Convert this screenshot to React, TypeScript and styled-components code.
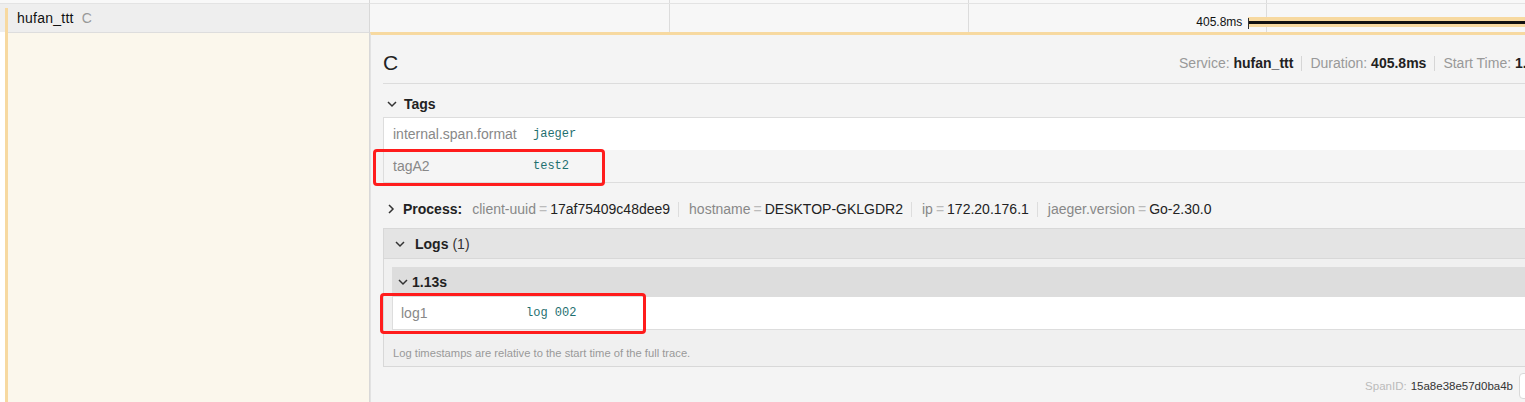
import React from "react";
import styled, { createGlobalStyle } from "styled-components";

const SERVICE = "#f7d9a0";
const LEFT = 370;

const GlobalStyle = createGlobalStyle`
  html, body { margin: 0; padding: 0; background: #fff; overflow: hidden; }
  body { font-family: "Liberation Sans", Arial, sans-serif; font-size: 14px; color: #333; }
  * { box-sizing: border-box; }
`;

const Page = styled.div`
  position: relative;
  width: 1565px;
  height: 402px;
  overflow: hidden;
`;

const Row = styled.div`
  display: grid;
  grid-template-columns: ${LEFT}px 1fr;
`;

const PrevName = styled.div`
  height: 4px;
  background: #f8f8f8;
  border-bottom: 1px solid #e3e3e3;
  border-right: 1px solid #d8d8d8;
`;

const Timeline = styled.div<{ $bg: string; $h: number; $border?: boolean }>`
  position: relative;
  height: ${(p) => p.$h}px;
  background: ${(p) => p.$bg};
  border-bottom: ${(p) => (p.$border ? "1px solid #e3e3e3" : "none")};
`;

const Tick = styled.div<{ $at: number }>`
  position: absolute;
  top: 0;
  bottom: 0;
  left: ${(p) => p.$at}%;
  width: 1px;
  background: #dcdcdc;
`;

const NameCell = styled.div`
  display: flex;
  height: 28px;
  background: #eeeeee;
  border-right: 1px solid #d8d8d8;
`;

const Indent = styled.div`
  width: 5px;
  flex: none;
`;

const AccentBar = styled.div<{ $top?: number }>`
  width: 3px;
  flex: none;
  margin-top: ${(p) => p.$top ?? 0}px;
  background: ${SERVICE};
`;

const SpanName = styled.div`
  padding-left: 9px;
  line-height: 28px;
  font-size: 14px;
  letter-spacing: 0.25px;
  color: #111;
  white-space: nowrap;
`;

const SpanOp = styled.span`
  margin-left: 8px;
  color: #999;
`;

const BarGroup = styled.div`
  position: absolute;
  left: 73.5%;
  top: 13px;
  right: 0;
  height: 10px;
`;

const BarLabel = styled.span`
  position: absolute;
  right: calc(100% + 6px);
  top: -2px;
  font-size: 12px;
  line-height: 14px;
  color: #111;
  white-space: nowrap;
`;

const BarBody = styled.div`
  position: absolute;
  inset: 0;
  background: ${SERVICE};
  display: flex;
  align-items: center;
`;

const BarLine = styled.div`
  height: 3px;
  width: 100%;
  background: #111;
`;

const BarStart = styled.div`
  position: absolute;
  left: 0;
  top: 1px;
  height: 11px;
  width: 1px;
  background: #333;
`;

const DetailLeft = styled.div`
  display: flex;
  height: 370px;
`;

const Cream = styled.div`
  flex: 1;
  background: #fbf7ec;
  border-top: 1px solid #dddddd;
  border-right: 1px solid #d8d8d8;
`;

const DetailPanel = styled.div`
  background: #f4f4f4;
  border-top: 3px solid ${SERVICE};
  border-left: 1px solid #e2e2e2;
  padding: 12px;
  height: 370px;
`;

const Header = styled.div`
  display: flex;
  align-items: center;
  justify-content: space-between;
  height: 37px;
  padding-bottom: 4px;
  border-bottom: 1px solid #dcdcdc;
`;

const Title = styled.h2`
  margin: 0;
  font-size: 21px;
  font-weight: normal;
  color: #222;
`;

const Overview = styled.div`
  display: flex;
  align-items: center;
  padding-right: 3px;
  font-size: 14px;
  white-space: nowrap;
`;

const OvItem = styled.div<{ $first?: boolean }>`
  padding: 0 8px;
  border-left: ${(p) => (p.$first ? "none" : "1px solid #d6d6d6")};
  line-height: 15px;
  &:last-child { padding-right: 0; }
`;

const OvLabel = styled.span`
  color: #999;
`;

const OvValue = styled.strong`
  color: #222;
  font-weight: bold;
`;

const Section = styled.div<{ $mt: number }>`
  margin-top: ${(p) => p.$mt}px;
`;

const AccHeader = styled.div<{ $h: number; $mb?: number }>`
  display: flex;
  align-items: center;
  height: ${(p) => p.$h}px;
  margin-bottom: ${(p) => p.$mb ?? 0}px;
  white-space: nowrap;
`;

const ChevronSvg = styled.svg<{ $ml: number; $mr: number }>`
  flex: none;
  margin-left: ${(p) => p.$ml}px;
  margin-right: ${(p) => p.$mr}px;
  fill: none;
  stroke: #333;
  stroke-width: 1.5;
`;

const Chevron = ({ dir, ml = 0, mr = 0 }: { dir: "down" | "right"; ml?: number; mr?: number }) => (
  <ChevronSvg viewBox="0 0 10 10" width={10} height={10} $ml={ml} $mr={mr}>
    {dir === "down" ? (
      <polyline points="1,3 5,7 9,3" />
    ) : (
      <polyline points="3,1 7,5 3,9" />
    )}
  </ChevronSvg>
);

const HeadLabel = styled.strong`
  font-weight: bold;
  color: #222;
  font-size: 14px;
`;

const Count = styled.span`
  margin-left: 4px;
  color: #333;
`;

const KVTable = styled.div`
  background: #fff;
  border: 1px solid #dddddd;
`;

const KVRow = styled.div<{ $h: number; $key: number }>`
  display: grid;
  grid-template-columns: ${(p) => p.$key}px 1fr;
  align-items: center;
  height: ${(p) => p.$h}px;
  &:nth-child(2n) { background: #f5f5f5; }
`;

const KVKey = styled.div<{ $pl: number }>`
  padding-left: ${(p) => p.$pl}px;
  color: #888;
  font-size: 14px;
  white-space: pre;
`;

const KVValue = styled.div`
  font-family: "Liberation Mono", "DejaVu Sans Mono", monospace;
  font-size: 12px;
  color: #1f7070;
  white-space: pre;
`;

const Summary = styled.span`
  margin-left: 10px;
  padding-right: 8px;
  border-right: 1px solid #dddddd;
  line-height: 15px;
  white-space: nowrap;
  &:last-child { border-right: none; }
`;

const SumKey = styled.span`
  color: #888;
`;

const SumDelim = styled.span`
  color: #bbb;
  padding: 0 3px;
`;

const SumValue = styled.span`
  color: #222;
`;

const LogsBox = styled.div`
  border: 1px solid #d8d8d8;
`;

const LogsHeader = styled.div`
  display: flex;
  align-items: center;
  height: 30px;
  background: #e4e4e4;
  border-bottom: 1px solid #d8d8d8;
`;

const LogsContent = styled.div`
  background: #f0f0f0;
  padding: 8px 8px 0 8px;
`;

const LogItemHeader = styled.div`
  display: flex;
  align-items: center;
  height: 29px;
  background: #dddddd;
`;

const LogFooter = styled.div`
  padding: 16px 0 6px 1px;
  font-size: 11.2px;
  line-height: 14px;
  color: #999;
`;

const DebugRow = styled.div`
  display: flex;
  justify-content: flex-end;
  align-items: center;
  margin-top: 6px;
  height: 26px;
  font-size: 11.5px;
`;

const DebugLabel = styled.span`
  color: #bbb;
`;

const DebugValue = styled.span`
  margin-left: 4px;
  color: #333;
`;

const CopyButton = styled.button`
  margin-left: 6px;
  width: 34px;
  height: 26px;
  background: #fff;
  border: 1px solid #d9d9d9;
  border-radius: 4px;
  padding: 0;
`;

const Annotation = styled.div<{ $l: number; $t: number; $w: number; $h: number }>`
  position: absolute;
  left: ${(p) => p.$l}px;
  top: ${(p) => p.$t}px;
  width: ${(p) => p.$w}px;
  height: ${(p) => p.$h}px;
  border: 3px solid #ff1c1c;
  border-radius: 4px;
  pointer-events: none;
`;

const tags = [
  { k: "internal.span.format", v: "jaeger" },
  { k: "tagA2", v: "test2" },
];

const processItems = [
  { k: "client-uuid", v: "17af75409c48dee9" },
  { k: "hostname", v: "DESKTOP-GKLGDR2" },
  { k: "ip", v: "172.20.176.1" },
  { k: "jaeger.version", v: "Go-2.30.0" },
];

const ticks = [25, 50, 75];

export default function App() {
  return (
    <>
      <GlobalStyle />
      <Page>
        <Row>
          <PrevName />
          <Timeline $bg="#f8f8f8" $h={4} $border>
            {ticks.map((t) => (
              <Tick key={t} $at={t} />
            ))}
          </Timeline>
        </Row>
        <Row>
          <NameCell>
            <Indent />
            <AccentBar $top={4} />
            <SpanName>
              hufan_ttt<SpanOp>C</SpanOp>
            </SpanName>
          </NameCell>
          <Timeline $bg="#f7f7f7" $h={28}>
            {ticks.map((t) => (
              <Tick key={t} $at={t} />
            ))}
            <BarGroup>
              <BarLabel>405.8ms</BarLabel>
              <BarBody>
                <BarLine />
              </BarBody>
              <BarStart />
            </BarGroup>
          </Timeline>
        </Row>
        <Row>
          <DetailLeft>
            <Indent />
            <AccentBar />
            <Cream />
          </DetailLeft>
          <DetailPanel>
            <Header>
              <Title>C</Title>
              <Overview>
                <OvItem $first>
                  <OvLabel>Service: </OvLabel>
                  <OvValue>hufan_ttt</OvValue>
                </OvItem>
                <OvItem>
                  <OvLabel>Duration: </OvLabel>
                  <OvValue>405.8ms</OvValue>
                </OvItem>
                <OvItem>
                  <OvLabel>Start Time: </OvLabel>
                  <OvValue>1.13s</OvValue>
                </OvItem>
              </Overview>
            </Header>

            <Section $mt={9}>
              <AccHeader $h={22} $mb={2}>
                <Chevron dir="down" ml={4} mr={7} />
                <HeadLabel>Tags</HeadLabel>
              </AccHeader>
              <KVTable>
                {tags.map((t) => (
                  <KVRow key={t.k} $h={32} $key={149}>
                    <KVKey $pl={9}>{t.k}</KVKey>
                    <KVValue>{t.v}</KVValue>
                  </KVRow>
                ))}
              </KVTable>
            </Section>

            <Section $mt={14}>
              <AccHeader $h={24}>
                <Chevron dir="right" ml={3} mr={7} />
                <HeadLabel>Process:</HeadLabel>
                {processItems.map((p) => (
                  <Summary key={p.k}>
                    <SumKey>{p.k}</SumKey>
                    <SumDelim>=</SumDelim>
                    <SumValue>{p.v}</SumValue>
                  </Summary>
                ))}
              </AccHeader>
            </Section>

            <Section $mt={7}>
              <LogsBox>
                <LogsHeader>
                  <Chevron dir="down" ml={11} mr={10} />
                  <HeadLabel>Logs</HeadLabel>
                  <Count>(1)</Count>
                </LogsHeader>
                <LogsContent>
                  <LogItemHeader>
                    <Chevron dir="down" ml={6} mr={4} />
                    <HeadLabel>1.13s</HeadLabel>
                  </LogItemHeader>
                  <KVTable>
                    <KVRow $h={32} $key={133}>
                      <KVKey $pl={8}>log1</KVKey>
                      <KVValue>log 002</KVValue>
                    </KVRow>
                  </KVTable>
                  <LogFooter>Log timestamps are relative to the start time of the full trace.</LogFooter>
                </LogsContent>
              </LogsBox>
            </Section>

            <DebugRow>
              <DebugLabel>SpanID:</DebugLabel>
              <DebugValue>15a8e38e57d0ba4b</DebugValue>
              <CopyButton aria-label="copy" />
            </DebugRow>
          </DetailPanel>
        </Row>

        <Annotation $l={373} $t={149} $w={232} $h={37} />
        <Annotation $l={380} $t={293} $w={266} $h={41} />
      </Page>
    </>
  );
}
